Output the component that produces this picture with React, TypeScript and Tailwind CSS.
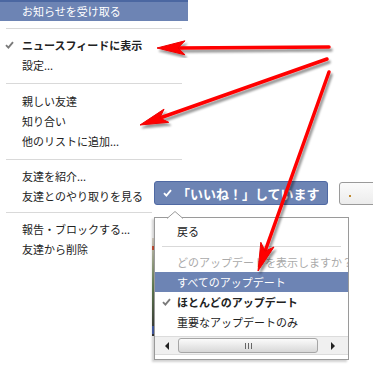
import React from 'react';

const Check = ({ color = '#7a7a7a', className = '' }: { color?: string; className?: string }) => (
  <svg width="9" height="8" viewBox="0 0 9 8" className={className}>
    <path d="M1 4.2 L3.4 6.6 L8 1.2" fill="none" stroke={color} strokeWidth="1.9" />
  </svg>
);

const Divider = ({ className = '' }: { className?: string }) => (
  <div className={`mx-[6px] h-px bg-[#d9d9d9] ${className}`} />
);

const MenuItem = ({ children, checked, bold }: { children: React.ReactNode; checked?: boolean; bold?: boolean }) => (
  <div className={`relative h-5 leading-5 pl-[22px] text-[11px] text-[#222] whitespace-nowrap ${bold ? 'font-bold' : ''}`}>
    {checked && <Check className="absolute left-[5px] top-[6px]" />}
    {children}
  </div>
);

function Arrow({ x1, y1, x2, y2 }: { x1: number; y1: number; x2: number; y2: number }) {
  const dx = x2 - x1;
  const dy = y2 - y1;
  const len = Math.hypot(dx, dy);
  const ux = dx / len;
  const uy = dy / len;
  const px = -uy;
  const py = ux;
  const headLen = 28;
  const notch = 21;
  const half = 7;
  const bx = x2 - ux * headLen;
  const by = y2 - uy * headLen;
  const nx = x2 - ux * notch;
  const ny = y2 - uy * notch;
  const head = `${x2},${y2} ${bx + px * half},${by + py * half} ${nx},${ny} ${bx - px * half},${by - py * half}`;
  return (
    <g filter="url(#shadow)">
      <line x1={x1} y1={y1} x2={nx} y2={ny} stroke="#f00" strokeWidth="3.5" strokeLinecap="round" />
      <polygon points={head} fill="#f00" stroke="#e00" strokeWidth="1" strokeLinejoin="round" />
    </g>
  );
}

export default function App() {
  return (
    <div className="relative w-[373px] h-[374px] overflow-hidden bg-white font-['Noto_Sans_CJK_JP',sans-serif]">
      {/* left menu */}
      <div className="w-[188px]">
        <div className="h-[21px] bg-[#6d84b4] border-t-2 border-[#4b67a1] pl-[22px] text-[11px] leading-[18px] text-white">
          お知らせを受け取る
        </div>
        <Divider className="mt-[7px] mb-[6px]" />
        <MenuItem checked bold>ニュースフィードに表示</MenuItem>
        <MenuItem>設定...</MenuItem>
        <Divider className="mt-[8px] mb-[7px]" />
        <MenuItem>親しい友達</MenuItem>
        <MenuItem>知り合い</MenuItem>
        <MenuItem>他のリストに追加...</MenuItem>
        <Divider className="mt-[8px] mb-[6px]" />
        <MenuItem>友達を紹介...</MenuItem>
        <MenuItem>友達とのやり取りを見る</MenuItem>
        <Divider className="mt-[6px] mb-[6px] mr-[36px]" />
        <MenuItem>報告・ブロックする...</MenuItem>
        <MenuItem>友達から削除</MenuItem>
      </div>

      {/* like button */}
      <div className="absolute left-[154px] top-[181px] w-[174px] h-[24px] rounded-[3px] bg-[#6d84b4] border border-[#4f69a3] flex items-center text-white">
        <Check color="#fff" className="ml-[8px]" />
        <span className="ml-[5px] text-[13px] font-bold leading-none whitespace-nowrap">「いいね！」しています</span>
      </div>

      {/* second button, cut off */}
      <div className="absolute left-[339px] top-[182px] w-[50px] h-[23px] rounded-[3px] border border-[#9a9a9a] bg-gradient-to-b from-[#fbfbfb] to-[#ececec]">
        <div className="absolute left-[9px] top-[12px] w-[2px] h-[2px] bg-[#c08a30]" />
      </div>

      {/* image peeking out behind dropdown */}
      <div className="absolute left-[152px] top-[238px] w-[3px] h-[98px] bg-gradient-to-b from-[#e6dcd0] via-[#6d8b5a] to-[#3a3a3a]" />
      <div className="absolute left-[152px] top-[246px] w-[3px] h-[4px] bg-[#d2553a]" />
      <div className="absolute left-[152px] top-[326px] w-[3px] h-[8px] bg-[#4a64b0]" />

      {/* dropdown */}
      <div className="absolute left-[154px] top-[217px] w-[195px] h-[143px] bg-white border border-[#9a9a9a] shadow-[-2px_2px_2px_rgba(0,0,0,0.18)]">
        {/* caret */}
        <svg className="absolute left-[12px] top-[-7px]" width="16" height="8" viewBox="0 0 16 8">
          <path d="M0 7.5 L8 0.5 L16 7.5" fill="#fff" stroke="#9a9a9a" strokeWidth="1" />
        </svg>
        <div className="h-[3px]" />
        <div className="h-5 leading-5 pl-[22px] text-[11px] text-[#222]">戻る</div>
        <div className="mx-[7px] my-[5px] h-px bg-[#d9d9d9]" />
        <div className="h-5 leading-5 pl-[22px] text-[11px] text-[#aaa] whitespace-nowrap overflow-hidden">どのアップデートを表示しますか？</div>
        <div className="h-5 leading-5 pl-[22px] text-[11px] text-white bg-[#6d84b4] whitespace-nowrap">すべてのアップデート</div>
        <div className="relative h-5 leading-5 pl-[22px] text-[11px] text-[#222] font-bold whitespace-nowrap">
          <Check className="absolute left-[7px] top-[6px]" />
          ほとんどのアップデート
        </div>
        <div className="h-5 leading-5 pl-[22px] text-[11px] text-[#222] whitespace-nowrap">重要なアップデートのみ</div>
        {/* scrollbar */}
        <div className="absolute left-0 right-0 bottom-[4px] h-[19px] bg-[#f0f0f0] border-y border-[#dcdcdc] flex items-center">
          <div className="w-[23px] flex justify-center">
            <div className="w-0 h-0 border-y-[4px] border-y-transparent border-r-[4px] border-r-[#222]" />
          </div>
          <div className="w-[140px] h-[15px] rounded-[3px] border border-[#a6a6a6] bg-gradient-to-b from-[#fbfbfb] to-[#d8d8d8] flex items-center justify-center gap-[2px]">
            <div className="w-px h-[6px] bg-[#666]" />
            <div className="w-px h-[6px] bg-[#666]" />
            <div className="w-px h-[6px] bg-[#666]" />
          </div>
          <div className="flex-1 flex justify-center">
            <div className="w-0 h-0 border-y-[4px] border-y-transparent border-l-[4px] border-l-[#222]" />
          </div>
        </div>
      </div>

      {/* red arrows */}
      <svg className="absolute inset-0 pointer-events-none" width="373" height="374" viewBox="0 0 373 374">
        <defs>
          <filter id="shadow" x="-20%" y="-20%" width="140%" height="140%">
            <feDropShadow dx="2" dy="3" stdDeviation="1.3" floodColor="#000" floodOpacity="0.4" />
          </filter>
        </defs>
        <Arrow x1={329} y1={47} x2={157} y2={48} />
        <Arrow x1={327} y1={59} x2={140} y2={125} />
        <Arrow x1={329} y1={72} x2={258} y2={271} />
      </svg>
    </div>
  );
}
